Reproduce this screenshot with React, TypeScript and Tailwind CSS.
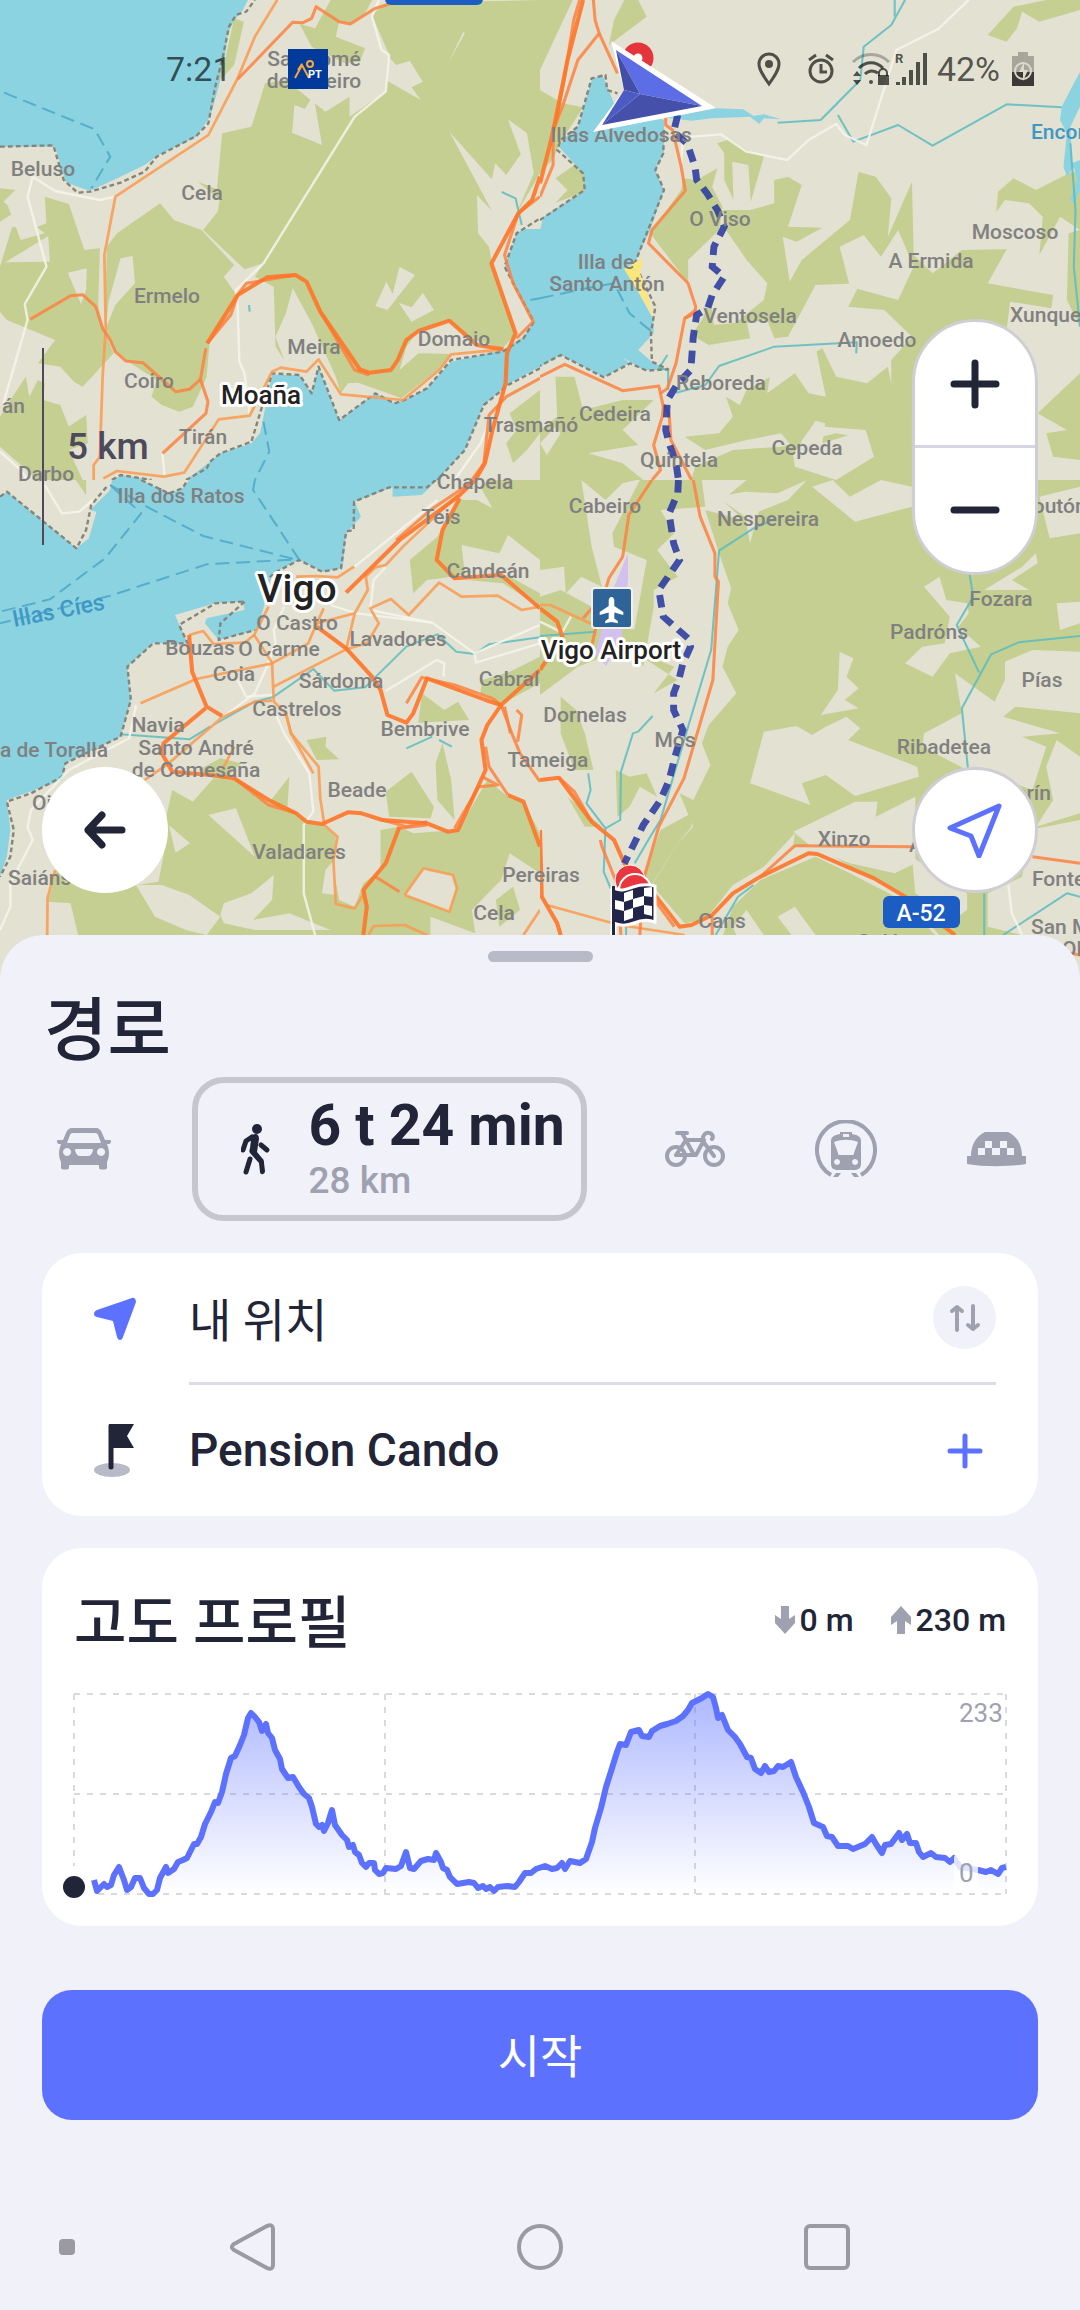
import React from "react";

type Road = { kind: string; points: string[] };

type Tile = {
  x: number;
  y: number;
  height: number;
  water: string[];
  forest: string[];
  fields: string[];
  roads: Road[];
};

const ROAD_STYLES: Record<
  string,
  { stroke: string; width: number; dash?: string; opacity?: number }
> = {
  river: { stroke: "#5bbcc0", width: 6, opacity: 0.85 },
  ferry: { stroke: "#56aecb", width: 6, dash: "40 20" },
  coast: { stroke: "#87857a", width: 7, dash: "14 9" },
  white: { stroke: "#f6f4ec", width: 7, opacity: 0.85 },
  secondary: { stroke: "#fa9a50", width: 8, opacity: 0.85 },
  primary: { stroke: "#fd8140", width: 9, opacity: 0.85 },
  motorway: { stroke: "#ff7529", width: 12, opacity: 0.9 },
};

const TILES: Tile[] = [
  {
    x: 0,
    y: 0,
    height: 1440,
    forest: [
      "1080,45 1120,10 1568,0 1568,520 1500,640 1424,790 1497,1000 1460,1045 1350,1010 1305,962 1215,990 1180,1040 1160,1110 1215,1060 1310,1062 1270,1110 1165,1195 1100,1170 1040,1148 1010,1150 990,1180 975,1130 905,970 850,865 830,940 800,1010 825,1080 800,1040 795,860 740,830 765,790 710,808 590,690 632,635 638,600 575,545 630,568 645,400 730,380 770,250 830,240 945,335 1015,290 1015,350 1120,275 1130,165",
      "870,72 915,85 960,0 1080,0 1060,40 1017,72 985,65 975,110 1060,145 1045,185 1000,190 905,140",
      "680,55 708,65 680,195 640,240",
      "0,565 45,570 10,605 45,635 0,665",
      "130,590 200,612 245,750 290,745 285,920 300,985 330,1060 240,1160 215,1145 175,1100 110,1090 160,1020 20,960 0,935 0,800 35,682 110,680 135,670",
      "75,1130 85,1190 110,1140 130,1150 125,1200 175,1215 200,1280 170,1300 250,1245 255,1330 200,1350 240,1440 110,1440 0,1340 0,1250 30,1200",
      "310,740 340,700 465,610 505,660 585,690 680,795 650,830 690,890 660,960 610,1010 600,1130 560,1220 520,1235 470,1215 440,1190 455,1140 365,1080 330,1050 305,980",
      "1480,1240 1568,1170 1568,1300 1530,1350 1490,1390 1470,1330 1500,1290",
    ],
    fields: [
      "855,315 885,327 910,285 935,435 848,398",
      "1305,395 1428,538 1438,490 1470,525 1512,463 1475,358 1530,400 1550,520 1500,640 1470,760 1550,965 1500,1010 1427,780 1420,740 1388,700 1385,585 1428,632",
      "1090,918 1122,845 1140,882 1160,800 1205,825 1125,930",
      "1158,908 1195,922 1228,878 1260,930 1195,965",
      "1345,95 1350,100 1303,186",
      "1125,165 1150,195 1190,183 1228,245 1195,262 1222,300 1120,240",
      "15,787 140,708 145,785",
      "197,818 252,805 250,870 235,912",
      "315,905 350,775 385,768 392,850 335,915 307,985",
      "20,610 60,720 130,700",
    ],
    water: [
      "0,0 720,0 705,30 680,60 662,100 650,190 635,260 610,350 570,410 460,465 420,495 330,540 262,572 225,560 190,545 160,440 0,440",
      "790,1125 870,1125 905,1180 925,1100 985,1260 1090,1180 1145,1210 1175,1200 1240,1165 1310,1085 1460,1050 1520,1010 1550,965 1465,800 1500,700 1520,687 1568,687 1568,1100 1480,1150 1405,1215 1350,1350 1270,1440 540,1440 610,1385 640,1360 730,1330 755,1300",
      "330,1440 350,1425 440,1440",
    ],
    roads: [
      { kind: "river", points: ["1457,576 1497,595 1515,675", "723,915 725,935"] },
      {
        kind: "ferry",
        points: ["12,278 275,388 320,470 265,565", "765,1265 782,1355 740,1440", "1540,900 1568,895"],
      },
      {
        kind: "coast",
        points: [
          "0,440 155,436 185,540 225,578 262,575 350,548 420,515 455,470 570,408 605,370 625,260 645,180 665,80 685,45 715,35 740,0",
          "325,1440 350,1425 440,1440",
          "540,1440 600,1405 610,1385 640,1360 730,1325 755,1240 790,1120 870,1125 905,1180 925,1100 985,1260 1090,1180 1145,1210 1175,1200 1240,1165 1310,1080 1460,1055 1520,1015 1550,965 1465,800 1500,700 1568,655",
          "1568,1105 1475,1155 1405,1215 1350,1350 1270,1440",
        ],
      },
      {
        kind: "white",
        points: [
          "1100,0 1080,50 1108,150 1130,165 1120,275 1030,350 765,790 685,870 690,915 695,1085 710,1120 725,1245",
          "95,530 80,590 135,800 72,912 80,960 10,1210",
          "95,530 160,573 290,600 335,590",
          "472,1360 478,1430",
          "0,1355 60,1410 80,1440",
          "1415,1280 1395,1330 1320,1440",
        ],
      },
      {
        kind: "secondary",
        points: [
          "805,0 740,110 690,235 605,405 335,590 303,765 307,985 298,1130 290,1370 272,1395 272,1440",
          "300,1435 340,1413 475,1430 535,1418 635,1258 725,1247 790,1115 815,1103 890,1115 925,1078 990,1183 1170,1200 1275,1110 1310,1063 1460,1048",
        ],
      },
      {
        kind: "primary",
        points: [
          "88,958 205,887 240,884 278,920 298,985 320,1020 335,1055 365,1083 415,1088 510,1175 550,1168 582,1138 598,1045",
          "582,1138 604,1205 598,1240 472,1360",
          "690,238 850,67 880,68 905,55 918,20 985,65 1017,72 1090,25 1130,12",
          "1568,590 1505,640 1465,765 1490,850 1548,965 1500,1015",
          "1568,1135 1470,1190 1420,1245 1405,1390 1370,1440",
          "602,1030 670,945 690,885 715,850 858,825",
          "930,935 1030,1110 1072,1125",
        ],
      },
      {
        kind: "motorway",
        points: [
          "602,1030 690,885 775,832 858,825 890,845 930,935 1045,1108 1072,1118 1135,1110 1155,1080 1180,1020 1215,993 1305,962 1385,1035 1462,1048",
          "1568,530 1545,600 1505,640 1427,790 1497,1000 1472,1060 1468,1150 1430,1290 1408,1390 1380,1440",
        ],
      },
    ],
  },
  {
    x: 540,
    y: 0,
    height: 1440,
    forest: [
      "0,0 95,0 45,110 0,210",
      "245,0 285,0 310,50 200,135 215,60",
      "0,270 65,310 125,322 70,410 35,480 0,520",
      "100,495 130,520 132,575 45,608 80,570 45,535",
      "320,700 410,570 415,535 455,540 515,505 500,560 530,620 520,690 430,780 430,850 350,740",
      "515,430 550,418 600,450 650,470 612,605 605,495 558,485 562,600 535,540 535,460",
      "530,630 610,630 680,610 680,540 720,530 760,555 720,680 820,683 745,725 705,710 725,845 760,780 900,660 925,515 975,530 1020,595 1010,710 1080,545 1085,765 1140,820 1225,750 1355,748 1300,850 1490,885 1485,925 1365,905 1355,990 1200,980 1110,1060 1080,1230 1020,1232 1020,1080 1080,1010 1000,930 895,920 930,850 800,855 720,1010 680,1015 660,960 560,975 650,900 660,850 600,780 540,690",
      "495,900 505,975 600,965 610,1015 490,1035 440,1005 470,960",
      "540,1190 580,1215 600,1170 820,1045 860,1130 950,1150 1010,1100 1030,1200 1080,1200 1080,1440 900,1440 970,1370 945,1290 825,1280 800,1265 740,1350 700,1300 600,1320 480,1350 420,1310 520,1300 560,1250",
      "45,1130 100,1130 125,1230 240,1200 330,1200 240,1290 285,1335 140,1360 240,1390 300,1440 0,1440 0,1290 50,1250",
      "450,1400 560,1350 700,1340 860,1300 1080,1340 1080,1440 440,1440",
      "1300,105 1375,20 1470,0 1568,0 1568,30 1450,65 1400,35 1385,85 1355,125",
      "1325,635 1330,575 1375,535 1440,570 1545,515 1568,520 1568,690 1510,650 1450,765 1460,650 1420,610 1350,600",
      "1535,700 1568,690 1568,980 1530,900",
      "1445,1240 1568,1120 1568,1380 1490,1370 1470,1300 1530,1290",
    ],
    fields: [
      "870,740 940,705 990,770 1040,690 1085,800 1040,900 900,860",
      "680,1040 800,1040 830,1190 780,1180 740,1120 660,1180",
      "735,1365 800,1262 828,1270 820,1330 945,1290 970,1370 860,1440 740,1400",
      "0,1330 45,1280 60,1300 20,1365",
    ],
    water: [
      "0,690 10,650 130,570 125,520 55,440 75,410 110,380 150,240 180,222 215,310 360,360 360,460 335,510 360,570 320,690 275,790 250,810 330,960 330,1000 285,1050 325,1085 370,1110 300,1110 240,1072 260,1090 185,1132 60,1065 0,1100",
      "340,350 410,345 510,325 590,328 620,348 650,343 700,358 650,355 637,372 610,350 500,355 440,362",
      "1568,215 1545,260 1515,320 1510,360 1530,400 1520,500 1530,530 1550,500 1560,540 1540,600 1550,610 1568,570 1568,480 1545,490 1540,380 1568,320",
    ],
    roads: [
      {
        kind: "river",
        points: [
          "1060,0 1020,75 940,140 930,240 815,360 690,368",
          "865,345 910,425 1040,375 1140,437 1355,313 1515,322",
          "1030,0 1030,50",
          "395,1178 480,1155 520,1098 680,1040 920,1027 918,1060",
          "1540,430 1555,630 1550,800 1568,980",
          "370,1065 345,1105 372,1110 372,1170",
        ],
      },
      { kind: "ferry", points: ["0,895 110,870 215,850 260,940 330,1000"] },
      {
        kind: "coast",
        points: [
          "0,660 130,570 125,520 50,450 60,420 110,380 150,235 190,225 195,270 225,280",
          "360,390 358,460 335,510 360,570 275,790 335,920 322,1000 325,1085 372,1108 310,1112 262,1090 185,1132 60,1065 0,1098",
        ],
      },
      {
        kind: "white",
        points: [
          "1245,0 1155,88 1035,150 948,435 885,405 860,372 780,420 718,480 600,455 525,403 415,412 410,490",
        ],
      },
      {
        kind: "primary",
        points: [
          "155,0 160,60 172,100 225,220",
          "172,100 110,180 65,320 38,390 38,495 0,590",
          "115,0 98,60 70,240 45,370",
          "365,350 365,375 385,390 410,500 422,572 325,690 315,730 430,850 452,920 450,940 420,955 395,1090 370,1165 350,1180",
          "452,930 420,955",
          "0,1130 72,1093 240,1172 345,1158 358,1220 355,1250 330,1335 350,1410 325,1440",
          "358,1215 375,1240 380,1320 440,1440",
        ],
      },
      { kind: "motorway", points: ["125,0 80,180 45,360 30,430 0,550"] },
      {
        kind: "route",
        points: [
          "400,345 388,395 428,432 450,500 455,540 485,580 515,630 535,680 505,740 500,800 535,830 500,885 487,925 455,945 445,1010 438,1110 400,1150 370,1200 365,1290 375,1330 395,1390 402,1440",
        ],
      },
    ],
  },
  {
    x: 0,
    y: 480,
    height: 1540,
    forest: [
      "1330,60 1385,60 1430,85 1395,20 1420,0 1568,0 1568,240 1475,165 1450,220 1340,195 1350,285 1240,300 1200,340 1190,240 1270,170",
      "1355,300 1480,290 1568,340 1568,380 1460,310",
      "1395,640 1400,600 1480,575 1568,530 1568,610 1460,670",
      "1225,640 1290,690 1330,665 1362,720 1215,728",
      "890,780 948,770 945,800 985,838 920,840",
      "485,1000 500,930 560,965 590,930 620,895 690,900 780,970 840,890 835,980 890,1025 940,1035 975,1070 970,1180 985,1260 1030,1280 1055,1210 1105,1170 1105,1050 1160,1040 1200,1060 1330,1050 1415,900 1475,950 1520,965 1568,1060 1568,1180 1480,1120 1455,1200 1370,1290 1380,1360 1250,1310 1250,1400 1060,1400 235,1400 205,1270 140,1265 165,1165 300,1230 400,1215 460,1205 480,1100",
      "1120,935 1195,875 1260,980 1250,1015 1130,1010",
      "1265,850 1285,790 1310,900 1320,1020 1270,960",
      "575,870 640,835 700,850 650,900",
      "220,0 250,0 250,45",
      "1440,1260 1490,1220 1510,1290 1450,1340",
    ],
    fields: [
      "605,1005 685,985 740,1130",
      "490,1035 552,1090 510,1118",
      "395,1215 470,1215 550,1245 640,1310 600,1365 540,1350 450,1310",
      "640,1305 650,1270 730,1240 795,1185 790,1260 735,1320 840,1300 960,1350 740,1350 650,1330",
      "1175,1245 1230,1165 1315,1185 1325,1225 1305,1295",
      "935,1240 945,1170 970,1140 975,1245",
    ],
    water: [
      "0,50 20,35 222,205 258,175 280,95 262,90 320,30 325,0 410,0 490,40 530,25 550,0 1270,0 1225,45 1140,50 1140,22 1030,65 1048,110 1005,160 995,265 935,275 870,240 790,280 765,385 745,450 635,480 595,430 600,415 710,390 705,365 625,370 508,405 545,490 445,490 370,560 380,660 350,770 190,850 180,900 20,960 30,1050 20,1130 0,1190",
    ],
    roads: [
      {
        kind: "river",
        points: [
          "350,763 550,778 610,740 740,665 795,650 910,567 970,632 1060,622 1180,500 1270,463 1325,515 1378,522 1420,493 1568,472",
          "1180,805 1255,770",
          "1275,780 1312,800",
        ],
      },
      {
        kind: "ferry",
        points: [
          "320,15 410,100 305,235 145,358 0,395",
          "320,15 435,85 590,168 865,240",
          "740,0 735,30 868,238 600,253 320,347 0,430",
        ],
      },
      {
        kind: "coast",
        points: [
          "0,50 20,35 222,205 250,150 265,75 310,20",
          "410,0 490,40 530,25 545,0",
          "1265,0 1240,22 1130,22 1028,65 1027,150 1005,155 990,265 935,275 868,240 795,280 775,300",
          "705,365 625,370 520,435 545,490 445,490 370,560 380,660 350,770 190,850 180,890 90,940 20,965 40,1050 30,1130 0,1190",
          "710,365 640,430 635,480 740,450",
        ],
      },
      {
        kind: "white",
        points: [
          "130,15 180,100 230,95 270,60",
          "1270,60 1030,260",
          "1120,262 1085,300 1075,390 1255,428 1378,520 1568,435",
          "1378,522 1382,548 1568,490",
          "960,375 1035,400 1255,428",
          "825,380 795,450 800,490 775,560 740,640 610,740",
          "690,600 715,650 790,645",
          "800,700 825,760 898,880 910,995 882,1035 882,1240 915,1365",
          "395,675 375,775 200,870 90,990 80,1040 95,1080 30,1210 30,1280 0,1350",
          "1120,633 1268,540 1290,550 1288,590",
        ],
      },
      {
        kind: "secondary",
        points: [
          "1028,260 980,292 920,288 860,290",
          "920,430 895,490 790,550 570,597 408,670",
          "780,380 738,465 790,548 795,665 830,700 845,760 925,860 930,955 942,1035 980,1070 968,1140 975,1272 1030,1285 1060,1235",
          "830,700 845,760 910,880",
          "549,465 590,453 620,492 710,488 738,465",
          "795,620 1005,508 1030,400 920,430",
          "940,385 915,440",
          "1330,45 1170,200 1120,255 1090,262 1062,290 1068,330 1030,400",
          "1000,510 1065,490 1100,430 1075,385 1135,357 1187,405 1275,308 1340,350 1445,347 1515,390 1568,380",
          "790,662 740,665 645,712 490,850 420,900",
          "1175,1245 1230,1165 1315,1185 1327,1225 1305,1295 1175,1245",
          "1070,1365 1085,1338 1175,1335 1240,1365",
          "1520,1365 1568,1290",
          "160,1170 138,1255 137,1365",
          "650,860 680,800",
        ],
      },
      {
        kind: "primary",
        points: [
          "1365,10 1250,90 1150,180",
          "1180,670 1225,592 1320,615 1430,655 1455,675",
          "1500,690 1515,705 1503,785",
          "1455,675 1490,770 1510,820 1568,905",
          "1465,680 1482,760",
          "1410,800 1420,860 1475,945",
          "1400,890 1445,915 1390,920 1320,1045",
          "1240,1025 1180,1040 1110,1020",
          "1240,1035 1160,1045",
          "1090,1190 1160,1235",
          "860,1000 780,975 680,895",
        ],
      },
      {
        kind: "motorway",
        points: [
          "1380,0 1330,50 1160,180 1005,338",
          "1335,55 1285,150 1268,240 1320,295 1455,285 1568,385",
          "920,440 1005,505 1080,590 1105,630 1125,705 1180,728 1200,700 1240,595 1410,660 1455,675 1568,570",
          "1455,675 1415,735 1398,780 1410,870 1330,1050 1300,1055 1240,1030 1110,1020 1050,1000 1010,997 935,1032 890,1025 860,1000 780,960 680,895 610,885 500,875 470,820 475,790 597,685",
          "549,465 558,575 600,680 645,708",
          "1475,945 1520,965 1568,1100",
          "1160,1040 1120,1150 1055,1230 1065,1280 1055,1365",
        ],
      },
    ],
  },
  {
    x: 540,
    y: 480,
    height: 1540,
    forest: [
      "0,0 120,0 150,200 180,320 120,290 75,340 70,260 0,270",
      "210,160 290,0 470,0 480,80 350,90 390,160 340,210 400,290 330,330 330,380 300,560 265,500 310,240 215,200",
      "120,0 190,60 240,10 280,0",
      "0,350 60,330 150,380 150,450 60,480 160,440 300,450 290,490 110,560 0,645",
      "250,500 340,560 400,600 330,640 390,560",
      "60,650 105,690 130,760 155,870 100,870 60,760",
      "220,870 260,890 310,880 340,950 290,920 260,980 225,1010",
      "350,1050 440,1000 440,1040 400,1090 320,1220 300,1190",
      "80,950 180,1040 130,1040",
      "440,0 600,0 530,60 590,120 480,90 520,220 555,325 545,370 577,450 545,500 530,560 570,640 490,735 470,790 495,855 445,960 405,940 445,1040 400,1090 325,1215 420,1330 480,1320 560,1215 650,1160 740,1060 735,1100 800,1095 900,1160 1060,1245 1220,1440 1568,1440 1568,0",
      "560,1280 640,1200 800,1130 900,1180 1050,1260 1180,1400 520,1400",
    ],
    fields: [
      "870,515 910,535 890,590 925,625 885,660 925,685 815,705 865,630",
      "650,755 745,738 790,765 830,740 890,710 930,745 895,780 1095,860 1100,890 915,948 830,885 760,910 785,975 610,910",
      "595,35 690,40 775,0 720,60 635,95 610,190 595,110 515,50",
      "790,20 915,125 1080,80 1080,20 990,0 900,50 850,0",
      "735,1055 915,965 980,965 975,1010 1090,950 1090,1150 1030,1180 900,1150 800,1110",
      "1115,320 1160,290 1180,360 1240,370 1245,400 1215,440 1280,500 1190,520 1140,590 1060,550 1110,500 1175,490 1190,410",
      "1205,580 1320,665 1350,600 1350,545 1430,510 1568,515 1568,700 1380,680 1345,710 1510,760 1400,770 1470,800 1430,930 1350,900 1240,870 1110,800 1115,760 1225,700",
      "1290,330 1400,260 1440,220 1445,250 1370,300 1420,330",
      "1450,50 1568,20 1568,160 1480,175",
      "1500,370 1568,365 1568,430 1510,450",
      "1080,1130 1240,1240 1240,1290 1200,1320 1090,1240",
      "1420,1050 1568,1020 1568,1540 1440,1480 1400,1365 1300,1340 1300,1240 1400,1190",
      "560,1340 600,1290 650,1365 570,1365",
      "690,1310 740,1280 800,1365 730,1365",
      "1470,860 1500,780 1568,830 1568,1000 1440,1040 1490,960",
    ],
    water: [],
    roads: [
      {
        kind: "river",
        points: [
          "685,115 620,145 520,212 497,510 430,740 350,1020 320,1070 275,1150",
          "140,880 147,930 135,970 190,1045 185,1175 205,1225",
          "327,708 285,755 270,760 235,875 233,1020 190,1045",
          "1247,280 1258,350 1210,435 1275,578",
          "1568,468 1390,487 1310,523 1225,685 1243,870",
          "1290,1240 1290,1365",
          "1568,1250 1530,1240 1345,1365",
          "0,468 160,455",
          "510,1365 575,1250 620,1215",
          "250,1335 250,1365",
        ],
      },
      { kind: "white", points: ["1360,1215 1370,1300 1400,1365", "60,465 90,410", "0,425 60,455"] },
      { kind: "secondary", points: ["0,375 30,375 150,432", "20,1275 230,1335 420,1365"] },
      {
        kind: "primary",
        points: [
          "445,0 465,110 508,220 508,290 518,305 502,600 418,895 345,1040 300,1200 290,1365",
          "325,0 258,105 240,230 200,295 190,330",
          "125,415 190,340",
          "165,430 150,500",
          "55,893 100,935 150,1025",
          "740,1097 1090,1100",
          "740,1097 640,1190",
          "1430,1130 1568,1150",
          "175,1080 180,1100 225,1215 235,1365",
          "245,1150 340,1270 390,1340",
          "500,1365 500,1310",
          "1540,1420 1568,1425",
        ],
      },
      {
        kind: "motorway",
        points: [
          "0,385 50,425 65,470 0,570",
          "0,900 55,893 150,1025 215,1080 245,1150 330,1240 405,1340 440,1335 500,1305 560,1240 640,1190 780,1120 805,1122 970,1195 1060,1250 1205,1365",
          "0,1050 5,1250 50,1330 60,1365",
        ],
      },
      {
        kind: "route",
        points: [
          "402,0 400,40 375,100 388,190 405,240 365,300 345,330 358,410 430,475 437,500 415,550 403,600 388,640 388,690 415,750 392,830 375,900 350,960 300,1035 245,1150",
        ],
      },
    ],
  },
];

// [text, x, baseline, anchor]
const PLACES: [string, number, number, ("start" | "end")?][] = [
  ["San Tomé", 314, 66],
  ["de Piñeiro", 314, 88],
  ["Beluso", 43, 176],
  ["Cela", 202, 200],
  ["Ermelo", 167, 303],
  ["Meira", 314, 354],
  ["Domaio", 454, 346],
  ["Coiro", 149, 388],
  ["án", 2, 413, "start"],
  ["Tirán", 203, 444],
  ["Darbo", 46, 481],
  ["Chapela", 475, 489],
  ["Trasmañó", 531, 432],
  ["Illa dos Ratos", 181, 503],
  ["Teis", 441, 524],
  ["Candeán", 488, 578],
  ["O Castro", 297, 630],
  ["Lavadores", 398, 646],
  ["Bouzas", 200, 655],
  ["O Carme", 279, 656],
  ["Coia", 234, 681],
  ["Sárdoma", 341, 688],
  ["Castrelos", 297, 716],
  ["Navia", 158, 732],
  ["Bembrive", 425, 736],
  ["Cabral", 509, 686],
  ["a de Toralla", 0, 757, "start"],
  ["Santo André", 196, 755],
  ["de Comesaña", 196, 777],
  ["Beade", 357, 797],
  ["Oia", 32, 810, "start"],
  ["Saiáns", 8, 885, "start"],
  ["Valadares", 299, 859],
  ["Pereiras", 541, 882],
  ["Cela", 494, 920],
  ["Tameiga", 548, 767],
  ["Illas Alvedosas", 621, 142],
  ["O Viso", 720, 226],
  ["Illa de", 606, 269],
  ["Santo Antón", 607, 291],
  ["Moscoso", 1015, 239],
  ["A Ermida", 931, 268],
  ["Ventosela", 750, 323],
  ["Xunqueira", 1010, 322, "start"],
  ["Amoedo", 877, 347],
  ["Reboreda", 721, 390],
  ["Cedeira", 615, 421],
  ["Cepeda", 807, 455],
  ["Quintela", 679, 467],
  ["Cabeiro", 605, 513],
  ["Nespereira", 768, 526],
  ["Soutón", 1020, 513, "start"],
  ["Fozara", 1001, 606],
  ["Padróns", 929, 639],
  ["Pías", 1042, 687],
  ["Dornelas", 585, 722],
  ["Mos", 675, 747],
  ["Ribadetea", 944, 754],
  ["Barín", 1051, 800, "end"],
  ["Xinzo", 844, 846],
  ["Areas", 909, 852, "start"],
  ["Fontenla", 1032, 886, "start"],
  ["Cans", 722, 928],
  ["Guláns", 889, 949],
  ["San Mateo", 1031, 934, "start"],
  ["Oliveira", 1062, 956, "start"],
];

const ELEVATION =
  "20,186 23,197 30,190 33,193 37,191 40,181 45,173 50,186 53,196 57,193 61,184 66,184 70,194 75,200 79,200 83,196 86,184 92,173 94,179 100,175 104,168 109,166 113,164 120,150 123,150 127,143 131,130 137,118 141,108 144,109 148,98 152,80 157,64 161,62 166,51 170,41 174,24 177,19 181,23 185,28 188,37 192,30 194,39 198,44 201,56 206,65 208,75 214,84 219,83 225,93 230,100 235,104 238,113 242,130 245,133 248,131 250,137 254,129 258,116 261,131 268,141 273,146 275,153 279,151 281,158 285,161 288,169 292,173 295,169 300,169 301,176 305,180 309,179 312,174 322,175 327,172 332,158 336,174 340,175 347,167 354,165 360,166 362,159 367,168 369,174 373,176 376,183 383,190 395,188 400,189 404,194 409,192 412,195 416,193 420,197 424,193 433,192 441,193 445,188 451,179 457,179 462,175 471,172 478,175 483,174 488,169 491,175 496,167 506,169 512,165 518,148 521,134 527,114 532,93 539,71 543,58 546,50 552,51 557,38 565,36 568,42 575,43 578,37 586,32 593,30 602,27 609,22 614,16 618,9 628,4 634,0 639,3 642,14 644,24 648,21 654,36 661,43 666,50 673,63 677,64 681,75 687,79 691,72 695,78 700,77 704,72 709,73 717,68 722,83 729,98 735,113 740,129 749,133 753,142 758,143 764,152 774,152 779,155 791,150 798,143 802,150 808,159 811,151 817,150 825,139 828,146 833,140 836,149 842,149 845,158 849,163 857,159 862,163 871,164 876,168 880,164 886,173 893,174 904,176 912,178 917,176 924,180 928,174 932,173";

const MapTile = ({ tile }: { tile: Tile }) => (
  <svg
    x={tile.x}
    y={tile.y}
    width={540}
    height={tile.height / 3}
    viewBox={`0 0 1568 ${tile.height}`}
    preserveAspectRatio="none"
  >
    {tile.forest.map((points) => (
      <polygon key={points} points={points} fill="#c5cf92" />
    ))}
    {tile.fields.map((points) => (
      <polygon key={points} points={points} fill="#e3e1d2" />
    ))}
    {tile.water.map((points) => (
      <polygon key={points} points={points} fill="#8bd3e1" />
    ))}
    {tile.roads
      .filter((road) => road.kind !== "route")
      .map((road) => {
        const style = ROAD_STYLES[road.kind];
        return road.points.map((points) => (
          <polyline
            key={points}
            points={points}
            fill="none"
            stroke={style.stroke}
            strokeWidth={style.width}
            strokeDasharray={style.dash}
            strokeOpacity={style.opacity}
            strokeLinejoin="round"
          />
        ));
      })}
  </svg>
);

const RouteTile = ({ tile }: { tile: Tile }) => (
  <svg
    x={tile.x}
    y={tile.y}
    width={540}
    height={tile.height / 3}
    viewBox={`0 0 1568 ${tile.height}`}
    preserveAspectRatio="none"
  >
    {tile.roads
      .filter((road) => road.kind === "route")
      .map((road) => (
        <polyline
          key={road.kind}
          points={road.points[0]}
          fill="none"
          stroke="#2a3b9f"
          strokeOpacity={0.88}
          strokeWidth={20}
          strokeDasharray="38 24"
        />
      ))}
  </svg>
);

const MapCanvas = () => (
  <svg
    className="h-full w-full"
    viewBox="0 0 1080 984"
    preserveAspectRatio="xMidYMin slice"
    fontFamily="Roboto, sans-serif"
    fontWeight={500}
  >
    <rect width="1080" height="984" fill="#e3e1d2" />
    {TILES.map((tile) => (
      <MapTile key={`${tile.x}-${tile.y}`} tile={tile} />
    ))}
    {/* beach, runway */}
    <polygon points="624,269 643,258 640,273 654,317" fill="#fde67a" />
    <polygon points="628,553 614,587 595,653 606,666 622,640 622,624 628,580" fill="#d2c0ef" />
    {TILES.map((tile) => (
      <RouteTile key={`${tile.x}-${tile.y}`} tile={tile} />
    ))}

    <g fontSize="21" fill="#808080" textAnchor="middle">
      {PLACES.map(([name, x, y, anchor]) => (
        <text key={`${name}-${y}`} x={x} y={y} textAnchor={anchor ?? "middle"}>
          {name}
        </text>
      ))}
    </g>
    <g fontSize="21" fill="#3f98c4">
      <text x="1031" y="139">
        Encoro
      </text>
      <text x="14" y="627" fontSize="23" transform="rotate(-11 14 627)">
        Illas Cíes
      </text>
    </g>
    <g fill="#222222" stroke="#ffffff" strokeWidth="6" strokeLinejoin="round" paintOrder="stroke" textAnchor="middle">
      <text x="261" y="404" fontSize="26">
        Moaña
      </text>
      <text x="297" y="602" fontSize="39">
        Vigo
      </text>
      <text x="611" y="659" fontSize="26">
        Vigo Airport
      </text>
    </g>

    {/* airport */}
    <rect x="592" y="588" width="40" height="40" rx="3" fill="#2f6499" stroke="#f2f0ea" strokeWidth="2" />
    <path
      d="M611.500 597c2 0 2.800 2 2.800 4v5l9 6v3l-9-2.500v6l3.500 2.500v2.300l-6.300-1.300-6.300 1.300V621l3.500-2.500v-6l-9 2.500v-3l9-6v-5c0-2 .8-4 2.800-4z"
      fill="#ffffff"
    />

    {/* road shields */}
    <rect x="385" y="-27" width="98" height="32" rx="6" fill="#1b5dc2" />
    <rect x="883" y="896" width="77" height="32" rx="6" fill="#1b5dc2" />
    <text x="921" y="921" fontSize="23" fill="#ffffff" textAnchor="middle">
      A-52
    </text>

    {/* scale */}
    <path d="M43 348V545" stroke="#4d4a5c" strokeWidth="2" />
    <text x="67" y="459" fontSize="37" fill="#4d4a5c">
      5 km
    </text>

    {/* finish */}
    <circle cx="630" cy="880" r="15" fill="#e8373e" stroke="#ffffff" strokeWidth="1" />
    <circle cx="635" cy="890" r="16" fill="#e8373e" stroke="#ffffff" strokeWidth="2" />
    <path d="M613.500 886V950" stroke="#ffffff" strokeWidth="6" />
    <path
      d="M613 888c8 4 14 1 20-1s14-3 22-1v36c-8-3-14-2-21 1s-14 3-21 0z"
      fill="#222448"
      stroke="#ffffff"
      strokeWidth="3"
    />
    <path d="M613.500 886V950" stroke="#222448" strokeWidth="3" />
    <g fill="#ffffff">
      <path d="M624 893l9-3v9l-9 3zM644 888l8-1v10l-8-1zM633 899l11-3v9l-11 3zM615 900l9 2v9l-9-2zM624 911l9-3v10l-9 3zM644 905l8 1v10l-8-2z" />
    </g>

    {/* current position */}
    <circle cx="638" cy="58" r="10" fill="#ffffff" stroke="#e4343c" strokeWidth="11" />
    <polygon points="611,41 716,108 593,132 624,90" fill="#ffffff" />
    <polygon points="616,50 702,106 640,94" fill="#5c6de6" />
    <polygon points="616,50 640,94 624,90" fill="#434fa4" />
    <polygon points="640,94 702,106 602,125" fill="#4450a9" />
    <polygon points="624,90 640,94 602,125" fill="#4c5bc4" />
  </svg>
);

const StatusBar = () => (
  <div className="absolute inset-x-0 top-[46px] flex h-[46px] items-center pr-[46px] pl-[166px] text-[34px] text-black/65">
    <span>7:21</span>
    <svg className="ml-14" width="40" height="40" viewBox="0 0 40 40">
      <rect width="40" height="40" fill="#003b9c" />
      <path d="M7 29l7-13 7 13M10 21l4-6" fill="none" stroke="#f9a63a" strokeWidth="2" />
      <circle cx="22" cy="15" r="3" fill="none" stroke="#f9a63a" strokeWidth="2" />
      <text x="20" y="29" fontSize="11" fontWeight="700" fill="#ffffff">
        PT
      </text>
    </svg>
    <div className="ml-auto flex items-center gap-2">
      <svg width="28" height="36" viewBox="0 0 28 36" fill="none" stroke="currentColor" strokeWidth="3">
        <path d="M14 33C9 26 4 19 4 13a10 10 0 0 1 20 0c0 6-5 13-10 20z" />
        <circle cx="14" cy="13" r="4" fill="currentColor" stroke="none" />
      </svg>
      <svg className="ml-4" width="28" height="32" viewBox="0 0 28 32" fill="none" stroke="currentColor" strokeWidth="3">
        <circle cx="14" cy="18" r="11" />
        <path d="M14 11v8h6M2 7l7-5M26 7l-7-5" />
      </svg>
      <svg className="ml-2" width="40" height="34" viewBox="0 0 40 34" fill="none" stroke="currentColor" strokeWidth="3">
        <path d="M2 10c10-10 26-10 36 0" opacity="0.4" />
        <path d="M8 16c7-7 17-7 24 0M14 22c4-4 8-4 13-1" />
        <circle cx="20" cy="30" r="2" fill="currentColor" stroke="none" />
        <path d="M2 24l4-5 4 5zM2 28l4 5 4-5z" fill="currentColor" stroke="none" />
        <path d="M28 24v-3a4 4 0 0 1 8 0v3" strokeWidth="2" />
        <rect x="27" y="23" width="11" height="10" fill="currentColor" stroke="none" />
      </svg>
      <svg className="-ml-1" width="34" height="34" viewBox="0 0 34 34" fill="currentColor">
        <text x="0" y="11" fontSize="13" fontWeight="700">
          R
        </text>
        <path d="M1 33v-3h4v3zM7 33v-8h4v8zM14 33V18h4v15zM21 33V10h4v23zM28 33V1h4v32z" />
      </svg>
      <span>42%</span>
      <svg className="ml-1" width="22" height="34" viewBox="0 0 22 34">
        <path d="M6 0h10v4h6v30H0V4h6z" fill="currentColor" opacity="0.4" />
        <path d="M0 20h22v14H0z" fill="currentColor" />
        <circle cx="11" cy="19" r="8" fill="none" stroke="#dcdacb" strokeWidth="2" />
        <path d="M12 10l-5 10h4v9l5-11h-4z" fill="#dcdacb" />
      </svg>
    </div>
  </div>
);

const CarIcon = () => (
  <svg width="54" height="42" viewBox="0 0 54 42" fill="currentColor">
    <path
      fillRule="evenodd"
      d="M15 0h24c3 0 5 2 6 5l3 7h5c2 0 1 4-1 4h-2c1 3 2 6 2 9 0 4-1 7-2 9v6c0 2-8 2-8 0v-3H12v3c0 2-8 2-8 0v-6c-1-2-2-5-2-9 0-3 1-6 2-9H2c-2 0-3-4-1-4h5l3-7c1-3 3-5 6-5zm1 5c-2 0-3 1-3 2l-3 8h34l-3-8c0-1-1-2-3-2zM10 20a4 4 0 1 0 .1 0zm34 0a4 4 0 1 0 .1 0zM20 21c-3 0-2 2-1 4s2 3 4 3h8c2 0 3-1 4-3s2-4-1-4z"
    />
  </svg>
);

const WalkIcon = () => (
  <svg width="30" height="51" viewBox="0 0 30 51" fill="none" stroke="currentColor" strokeLinecap="round">
    <circle cx="16" cy="5" r="5" fill="currentColor" stroke="none" />
    <path d="M9 12l5-2c3 0 4 2 4 5l-2 13 5 6c2 2 2 3 2 5l1 8c0 4-5 4-5 1l-1-9-8-9c-2-2-2-3-1-6l1-8z" fill="currentColor" stroke="none" />
    <path d="M11 13l-6 4-3 9" strokeWidth="5" strokeLinejoin="round" />
    <path d="M9 35L5 48" strokeWidth="5" />
    <path d="M20 21l6 5" strokeWidth="5" />
  </svg>
);

const BikeIcon = () => (
  <svg width="60" height="38" viewBox="0 0 60 38" fill="none" stroke="currentColor" strokeWidth="4" strokeLinejoin="round" strokeLinecap="round">
    <circle cx="11" cy="26" r="9" />
    <circle cx="49" cy="26" r="9" />
    <path d="M12 3h10M17 3l12 22M21 10L11 25h20l8-15zM37 10l12 16M38 11c-1-6 3-9 6-8 3 0 5 4 3 6" />
  </svg>
);

const TrainIcon = () => (
  <svg width="62" height="58" viewBox="0 0 62 58" fill="currentColor">
    <path d="M16 55a29 29 0 1 1 30 0" fill="none" stroke="currentColor" strokeWidth="4" />
    <path
      fillRule="evenodd"
      d="M25 12h12v2c6 1 9 3 9 7v22c0 5-2 7-7 7H23c-5 0-7-2-7-7V21c0-4 3-6 9-7zm3 2v3h6v-3zM19 22l4 11c0 2 1 2 2 2h12c1 0 2 0 2-2l4-11c-8-3-16-3-24 0zm3 17a3 3 0 1 0 .1 0zm18 0a3 3 0 1 0 .1 0z"
    />
    <path d="M18 57l3-4h5l-3 4zM44 57l-3-4h-5l3 4z" />
  </svg>
);

const TaxiIcon = () => (
  <svg width="59" height="36" viewBox="0 0 59 36" fill="currentColor">
    <path
      fillRule="evenodd"
      d="M18 1h23c9 4 14 13 14 24h4v8c-18 3-41 3-59 0v-8h4C4 14 9 5 18 1zm0 9v7h7v-7zm15 0v7h7v-7zM11 17v7h7v-7zm14 0v7h8v-7zm15 0v7h7v-7z"
    />
  </svg>
);

const MODE_BTN = "flex w-[84px] cursor-pointer justify-center text-[#9fa1b0]";

const TransportModes = () => (
  <div className="flex items-center justify-between">
    <button className={MODE_BTN} aria-label="자동차">
      <CarIcon />
    </button>
    <button className="flex h-[144px] cursor-pointer items-center rounded-[32px] border-[6px] border-[#c5c6d0] pr-4 pl-[43px] text-left text-[#222437]">
      <WalkIcon />
      <span className="ml-[37px] flex flex-col pt-1">
        <span className="text-[57px] leading-[60px] font-bold">6 t 24 min</span>
        <span className="text-[37px] leading-[50px] font-medium text-[#9fa1b0]">28 km</span>
      </span>
    </button>
    <button className={MODE_BTN} aria-label="자전거">
      <BikeIcon />
    </button>
    <button className={MODE_BTN} aria-label="대중교통">
      <TrainIcon />
    </button>
    <button className={MODE_BTN} aria-label="택시">
      <TaxiIcon />
    </button>
  </div>
);

const RoutePoints = () => (
  <div className="rounded-[40px] bg-white pr-[42px] pl-[52px] text-[46px] text-[#222437]">
    <div className="flex items-center">
      <svg className="shrink-0" width="42" height="44" viewBox="0 0 42 44">
        <path
          d="M38 1c2-1 4 1 4 4L29 40c-1 4-5 4-6 0l-4-16L3 20c-4-1-4-5 0-7z"
          fill="#5c72ff"
        />
      </svg>
      <div className="ml-[53px] flex h-[132px] flex-1 items-center justify-between border-b-[3px] border-[#dddbe8]">
        <span className="pt-2">내 위치</span>
        <button
          className="flex h-[63px] w-[63px] cursor-pointer items-center justify-center rounded-full bg-[#f1f1fa]"
          aria-label="출발지와 도착지 바꾸기"
        >
          <svg width="32" height="28" viewBox="0 0 32 28" fill="none" stroke="#9fa1b0" strokeWidth="4" strokeLinecap="round" strokeLinejoin="round">
            <path d="M8 26V3M3 7l5-4 5 4M24 2v23M19 21l5 4 5-4" />
          </svg>
        </button>
      </div>
    </div>
    <div className="flex h-[131px] items-center">
      <svg className="shrink-0" width="42" height="54" viewBox="0 0 42 54">
        <ellipse cx="18" cy="46" rx="18" ry="7" fill="#b8bac7" />
        <path d="M17 2v41" stroke="#222437" strokeWidth="5" strokeLinecap="round" />
        <path d="M16 0h24l-7 12 7 12H16z" fill="#222437" />
      </svg>
      <div className="ml-[53px] flex flex-1 items-center justify-between">
        <span className="font-medium">Pension Cando</span>
        <button className="flex w-[63px] cursor-pointer justify-center" aria-label="경유지 추가">
          <svg width="36" height="36" viewBox="0 0 36 36" stroke="#5c72ff" strokeWidth="5" strokeLinecap="round">
            <path d="M18 3v30M3 18h30" />
          </svg>
        </button>
      </div>
    </div>
  </div>
);

const ElevationProfile = () => (
  <div className="rounded-[40px] bg-white px-8 pt-[34px] pb-[32px] text-[#222437]">
    <div className="flex h-[80px] items-center justify-between">
      <h2 className="pt-1 text-[57px] font-medium">고도 프로필</h2>
      <div className="flex items-center gap-9 pb-1 text-[32px] font-medium">
        <span className="flex items-center gap-1">
          <svg width="22" height="28" viewBox="0 0 22 28" fill="#9fa1b0">
            <path d="M7 0h8v13l6-4v8L11 28 1 17V9l6 4z" />
          </svg>
          0 m
        </span>
        <span className="flex items-center gap-1">
          <svg width="22" height="28" viewBox="0 0 22 28" fill="#9fa1b0">
            <path d="M7 28h8V15l6 4v-8L11 0 1 11v8l6-4z" />
          </svg>
          230 m
        </span>
      </div>
    </div>
    <svg className="mt-8 h-auto w-full overflow-visible" viewBox="0 0 932 200">
      <defs>
        <linearGradient id="elevation" gradientUnits="userSpaceOnUse" x1="0" y1="0" x2="0" y2="200">
          <stop offset="0" stopColor="#5c72ff" stopOpacity="0.5" />
          <stop offset="1" stopColor="#5c72ff" stopOpacity="0" />
        </linearGradient>
      </defs>
      <path
        d="M0 0H932M0 100H932M24 200H932M0 0V172M311 0V200M621 0V200M932 0V200"
        fill="none"
        stroke="#d9d9e0"
        strokeWidth="2"
        strokeDasharray="6 7"
      />
      <polygon points={`20,200 ${ELEVATION} 932,200`} fill="url(#elevation)" />
      <polyline
        points={ELEVATION}
        fill="none"
        stroke="#5c72ff"
        strokeWidth="6"
        strokeLinejoin="round"
      />
      <rect x="880" y="160" width="24" height="36" rx="4" fill="#ffffff" fillOpacity="0.8" />
      <g fontSize="26" fill="#9fa1b0">
        <text x="885" y="28">
          233
        </text>
        <text x="885" y="188">
          0
        </text>
      </g>
      <circle cx="0" cy="193" r="11" fill="#222437" />
    </svg>
  </div>
);

const SystemNav = () => (
  <div className="flex items-center text-[#9b9aa1]">
    <div className="w-[110px] pl-[59px]">
      <div className="h-4 w-4 rounded-sm bg-[#9b9aa1]" />
    </div>
    <div className="grid flex-1 grid-cols-3 justify-items-center">
      <button className="cursor-pointer" aria-label="뒤로">
        <svg width="48" height="48" viewBox="0 0 48 48" fill="none" stroke="currentColor" strokeWidth="4" strokeLinejoin="round">
          <path d="M38 3L5 21c-3 2-3 4 0 6l33 18c4 2 6 0 6-3V6c0-3-2-5-6-3z" />
        </svg>
      </button>
      <button className="cursor-pointer" aria-label="홈">
        <svg width="48" height="48" viewBox="0 0 48 48" fill="none" stroke="currentColor" strokeWidth="4">
          <circle cx="24" cy="24" r="21" />
        </svg>
      </button>
      <button className="cursor-pointer" aria-label="최근 앱">
        <svg width="48" height="48" viewBox="0 0 48 48" fill="none" stroke="currentColor" strokeWidth="4">
          <rect x="3" y="3" width="42" height="42" rx="4" />
        </svg>
      </button>
    </div>
    <div className="w-[110px]" />
  </div>
);

const App = () => {
  return (
    <div className="flex min-h-screen flex-col bg-[#f1f1fa] font-['Roboto','Noto_Sans_CJK_KR',sans-serif]">
      <div className="relative h-[984px] overflow-hidden">
        <MapCanvas />
        <StatusBar />
        <div className="absolute top-[319px] right-[42px] flex w-[126px] flex-col overflow-hidden rounded-full border-[3px] border-[#cfced4] bg-white text-[#222437]">
          <button className="flex h-[126px] cursor-pointer items-center justify-center border-b-[3px] border-[#d6d5e2]" aria-label="확대">
            <svg width="50" height="50" viewBox="0 0 50 50" stroke="currentColor" strokeWidth="7" strokeLinecap="round">
              <path d="M25 4v42M4 25h42" />
            </svg>
          </button>
          <button className="flex h-[124px] cursor-pointer items-center justify-center" aria-label="축소">
            <svg width="50" height="50" viewBox="0 0 50 50" stroke="currentColor" strokeWidth="7" strokeLinecap="round">
              <path d="M4 25h42" />
            </svg>
          </button>
        </div>
        <button
          className="absolute top-[767px] left-[42px] flex h-[126px] w-[126px] cursor-pointer items-center justify-center rounded-full bg-white"
          aria-label="뒤로 가기"
        >
          <svg width="44" height="38" viewBox="0 0 44 38" fill="none" stroke="#222437" strokeWidth="7" strokeLinecap="round" strokeLinejoin="round">
            <path d="M19 4L5 19l14 15M5 19h34" />
          </svg>
        </button>
        <button
          className="absolute top-[767px] right-[42px] flex h-[126px] w-[126px] cursor-pointer items-center justify-center rounded-full border-[3px] border-[#cfced4] bg-white"
          aria-label="내 위치로 이동"
        >
          <svg width="56" height="56" viewBox="0 0 56 56" fill="none" stroke="#5c72ff" strokeWidth="5" strokeLinejoin="round">
            <path d="M52 4L3 26l21 8 8 20z" />
          </svg>
        </button>
      </div>

      <div className="relative -mt-[49px] flex flex-1 flex-col rounded-t-[44px] bg-[#f1f1fa] px-[42px] pt-4">
        <div className="mx-auto h-[11px] w-[105px] rounded-full bg-[#b8bac7]" />
        <h1 className="mt-[21px] ml-0.5 text-[69px] leading-[98px] font-medium text-[#222437]">경로</h1>
        <div className="-mt-1">
          <TransportModes />
        </div>
        <div className="mt-8 flex flex-col gap-8">
          <RoutePoints />
          <ElevationProfile />
        </div>
        <button className="mt-16 h-[130px] cursor-pointer rounded-[30px] bg-[#5c72ff] pt-1 text-[46px] text-white">
          시작
        </button>
        <div className="-mx-[42px] mt-[103px] pb-10">
          <SystemNav />
        </div>
      </div>
    </div>
  );
};

export default App;
